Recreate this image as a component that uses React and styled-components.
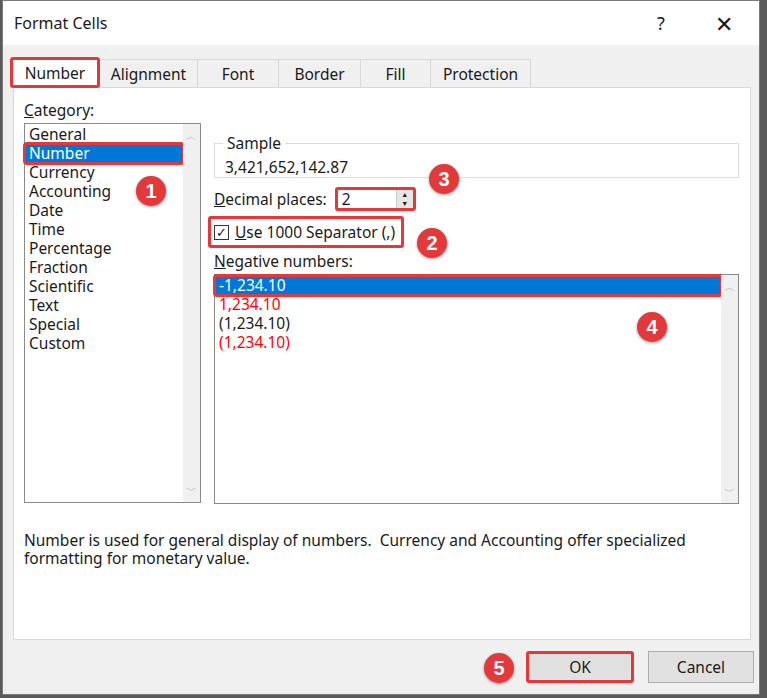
import React from "react";
import styled, { createGlobalStyle } from "styled-components";

const G = createGlobalStyle`
  html,body{margin:0;padding:0;background:#5a5a5a;}
  body{font-family:"Noto Sans","Open Sans",sans-serif;font-size:15.5px;color:#1a1a1a;}
`;
const RED = "#e5383b";

const Win = styled.div`
  position:relative;margin:0 0 0 2px;width:758px;height:695px;box-sizing:border-box;
  border:1px solid #7a7a7a;background:#f0f0f0;display:flex;flex-direction:column;
`;
const Title = styled.div`
  height:44px;background:#fff;display:flex;align-items:center;padding:0 0 0 11px;font-size:16px;
`;
const TitleText = styled.div`flex:1;`;
const TitleBtn = styled.div`width:${p=>p.w}px;text-align:center;font-size:${p=>p.fs}px;`;
const Tabs = styled.div`display:flex;padding:13px 0 0 8px;height:29px;align-items:flex-end;`;
const Tab = styled.div`
  height:28px;box-sizing:border-box;width:${p=>p.w}px;display:flex;align-items:center;justify-content:center;
  border:1px solid #d9d9d9;border-bottom:none;margin-left:-1px;
  ${p=>p.active?`background:#fff;height:31px;border:3px solid ${RED};border-radius:3px;z-index:2;margin-bottom:-1px;`:""}
`;
const Panel = styled.div`
  margin:0 8px 0 10px;height:553px;background:#fff;border:1px solid #d9d9d9;box-sizing:border-box;
  display:flex;flex-direction:column;padding:0 0 0 10px;
`;
const Cols = styled.div`display:flex;gap:13px;`;
const LeftCol = styled.div`display:flex;flex-direction:column;width:177px;`;
const Label = styled.div`height:${p=>p.h||20}px;display:flex;align-items:center;`;
const U = styled.span`text-decoration:underline;`;
const ListBox = styled.div`
  border:1px solid #8a8a8a;height:${p=>p.h}px;box-sizing:border-box;display:flex;position:relative;
`;
const Items = styled.div`flex:1;padding-top:${p=>p.pt||2}px;`;
const Item = styled.div`
  height:19px;line-height:19px;padding-left:4px;color:${p=>p.c||"#1a1a1a"};
  ${p=>p.sel?`background:#0078d7;color:#fff;outline:3px solid ${RED};outline-offset:-1px;border-radius:2px;`:""}
`;
const Scroll = styled.div`
  width:17px;background:#f0f0f0;display:flex;flex-direction:column;justify-content:space-between;align-items:center;
  color:#b0b0b0;font-size:11px;padding:4px 0;
`;
const RightCol = styled.div`display:flex;flex-direction:column;flex:1;padding-right:11px;padding-top:9px;`;
const Group = styled.fieldset`
  border:1px solid #dcdcdc;margin:0;padding:2px 0 10px 10px;height:46px;box-sizing:border-box;
  legend{padding:0 4px;margin-left:-2px;}
`;
const Row = styled.div`display:flex;align-items:center;gap:8px;height:${p=>p.h}px;`;
const Spin = styled.div`
  display:flex;width:81px;height:24px;border:3px solid ${RED};border-radius:3px;box-sizing:border-box;background:#fff;
`;
const SpinVal = styled.div`flex:1;padding-left:4px;line-height:18px;`;
const SpinBtns = styled.div`width:16px;display:flex;flex-direction:column;background:#e6e6e6;border-left:1px solid #ccc;font-size:7px;line-height:9px;text-align:center;`;
const Check = styled.div`
  display:flex;align-items:center;gap:6px;border:3px solid ${RED};border-radius:3px;padding:2px 6px 2px 3px;
`;
const Box = styled.div`width:13px;height:13px;border:1px solid #333;display:flex;align-items:center;justify-content:center;font-size:13px;`;
const Desc = styled.div`margin-top:27px;line-height:18px;`;
const Footer = styled.div`display:flex;justify-content:flex-end;gap:14px;padding:11px 5px 0 0;`;
const Btn = styled.div`
  width:${p=>p.w}px;height:32px;box-sizing:border-box;background:#e1e1e1;border:${p=>p.hl?`3px solid ${RED}`:"1px solid #adadad"};
  border-radius:${p=>p.hl?3:0}px;display:flex;align-items:center;justify-content:center;
`;
const Badge = styled.div`
  position:absolute;left:${p=>p.x-15}px;top:${p=>p.y-15}px;width:30px;height:30px;border-radius:50%;
  background:${RED};color:#fff;font-weight:bold;font-size:20px;display:flex;align-items:center;justify-content:center;
  box-shadow:0 1px 3px rgba(0,0,0,.4);font-family:"Liberation Sans",Arial,sans-serif;
`;

const cats=["General","Number","Currency","Accounting","Date","Time","Percentage","Fraction","Scientific","Text","Special","Custom"];

export default function App(){
  return <><G/>
  <Win>
    <Title><TitleText>Format Cells</TitleText><TitleBtn w={56} fs={18}>?</TitleBtn><TitleBtn w={70} fs={22}>✕</TitleBtn></Title>
    <Tabs>
      <Tab w={90} active>Number</Tab><Tab w={99}>Alignment</Tab><Tab w={82}>Font</Tab><Tab w={83}>Border</Tab><Tab w={71}>Fill</Tab><Tab w={101}>Protection</Tab>
    </Tabs>
    <Panel>
      <Cols>
        <LeftCol>
          <Label h={35} style={{paddingTop:9,boxSizing:"border-box"}}><U>C</U>ategory:</Label>
          <ListBox h={380}>
            <Items pt={1}>{cats.map(c=><Item key={c} sel={c==="Number"}>{c}</Item>)}</Items>
            <Scroll><span>︿</span><span>﹀</span></Scroll>
          </ListBox>
        </LeftCol>
        <RightCol>
          <div style={{height:35}}/>
          <Group><legend>Sample</legend>3,421,652,142.87</Group>
          <Row h={34} style={{paddingTop:4}}><span><U>D</U>ecimal places:</span>
            <Spin><SpinVal>2</SpinVal><SpinBtns><span>▲</span><span>▼</span></SpinBtns></Spin></Row>
          <Row h={32} style={{marginLeft:-6}}><Check><Box>✓</Box><span><U>U</U>se 1000 Separator (,)</span></Check></Row>
          <Label h={26}><U>N</U>egative numbers:</Label>
          <ListBox h={230}>
            <Items pt={1}>
              <Item sel>-1,234.10</Item>
              <Item c="#ff0000">1,234.10</Item>
              <Item>(1,234.10)</Item>
              <Item c="#ff0000">(1,234.10)</Item>
            </Items>
            <Scroll><span>︿</span><span>﹀</span></Scroll>
          </ListBox>
        </RightCol>
      </Cols>
      <Desc>Number is used for general display of numbers.&nbsp; Currency and Accounting offer specialized<br/>formatting for monetary value.</Desc>
    </Panel>
    <Footer><Btn w={108} hl>OK</Btn><Btn w={106}>Cancel</Btn></Footer>
    <Badge x={148} y={190}>1</Badge>
    <Badge x={429} y={242}>2</Badge>
    <Badge x={441} y={178}>3</Badge>
    <Badge x={649} y={326}>4</Badge>
    <Badge x={496} y={667}>5</Badge>
  </Win></>;
}
